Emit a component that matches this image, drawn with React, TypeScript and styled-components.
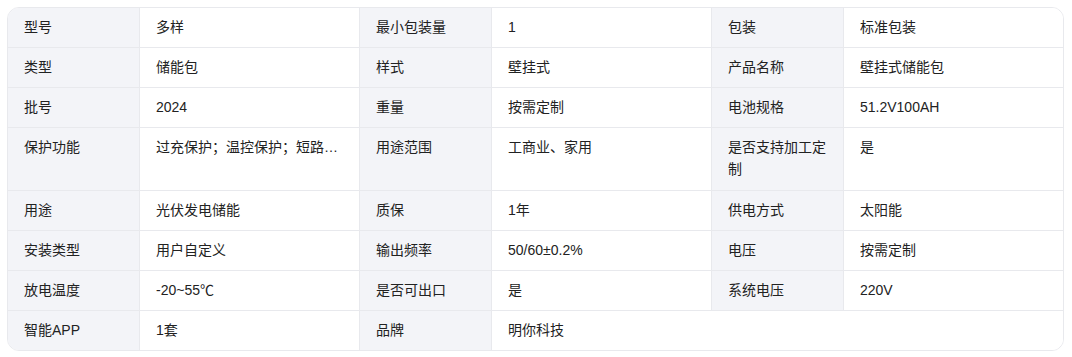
import React, { FC } from "react";
import styled, { createGlobalStyle } from "styled-components";

const GlobalStyle = createGlobalStyle`
  body {
    margin: 0;
    background: #fff;
    font-family: "Liberation Sans", "Noto Sans CJK SC", sans-serif;
  }
`;

const Page = styled.div`
  padding: 7px;
`;

const Table = styled.div`
  display: grid;
  grid-template-columns: 132px 220px 132px 220px 132px 219px;
  grid-template-rows: 40px 40px 40px 63px 40px 40px 40px 39px;
  width: 1057px;
  box-sizing: border-box;
  border: 1px solid #e8e9ed;
  border-radius: 12px;
  overflow: hidden;
`;

const Cell = styled.div<{ $label?: boolean; $last?: boolean; $end?: boolean; $span?: number }>`
  box-sizing: border-box;
  padding: 8px 16px 0;
  font-size: 14px;
  line-height: 22px;
  color: #222;
  overflow: hidden;
  background: ${(p) => (p.$label ? "#f3f4f8" : "#fff")};
  border-right: ${(p) => (p.$end ? "none" : "1px solid #e8e9ed")};
  border-bottom: ${(p) => (p.$last ? "none" : "1px solid #e8e9ed")};
  grid-column: ${(p) => (p.$span ? `span ${p.$span}` : "auto")};
  min-width: 0;
`;

const Clip = styled.span`
  display: block;
  white-space: nowrap;
  overflow: hidden;
  text-overflow: ellipsis;
`;

const rows: [string, string][][] = [
  [["型号", "多样"], ["最小包装量", "1"], ["包装", "标准包装"]],
  [["类型", "储能包"], ["样式", "壁挂式"], ["产品名称", "壁挂式储能包"]],
  [["批号", "2024"], ["重量", "按需定制"], ["电池规格", "51.2V100AH"]],
  [["保护功能", "过充保护；温控保护；短路保护；过放保护"], ["用途范围", "工商业、家用"], ["是否支持加工定制", "是"]],
  [["用途", "光伏发电储能"], ["质保", "1年"], ["供电方式", "太阳能"]],
  [["安装类型", "用户自定义"], ["输出频率", "50/60±0.2%"], ["电压", "按需定制"]],
  [["放电温度", "-20~55℃"], ["是否可出口", "是"], ["系统电压", "220V"]],
  [["智能APP", "1套"], ["品牌", "明你科技"]],
];

const App: FC = () => (
  <Page>
    <GlobalStyle />
    <Table>
      {rows.map((row, r) => {
        const last = r === rows.length - 1;
        return row.map(([k, v], i) => {
          const end = i === row.length - 1;
          const span = end && row.length < 3 ? 1 + (3 - row.length) * 2 : undefined;
          return (
            <React.Fragment key={`${r}-${i}`}>
              <Cell $label $last={last}>{k}</Cell>
              <Cell $last={last} $end={end} $span={span}>
                <Clip>{v}</Clip>
              </Cell>
            </React.Fragment>
          );
        });
      })}
    </Table>
  </Page>
);

export default App;
